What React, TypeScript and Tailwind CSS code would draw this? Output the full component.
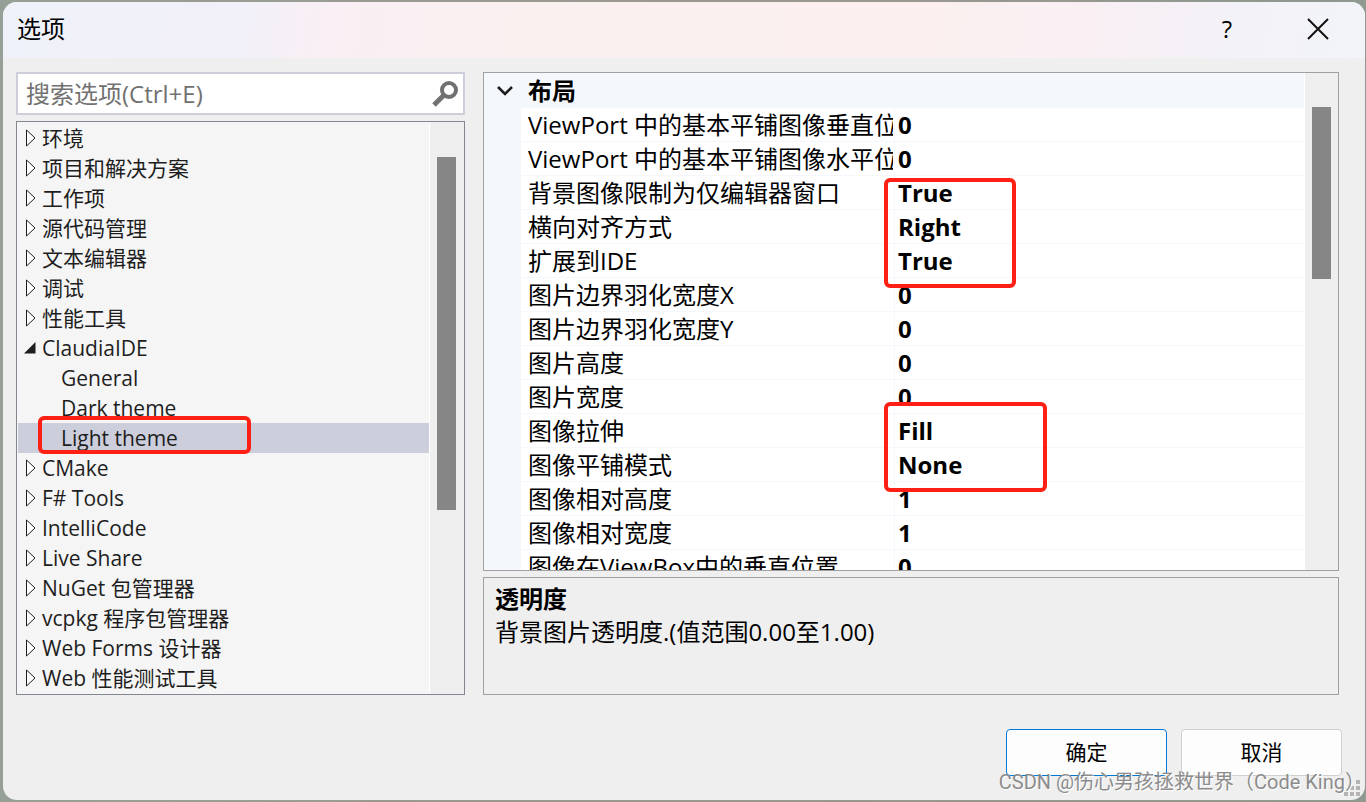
import { useState } from "react";

type Node = { label: string; level?: number; open?: boolean };

const nodes: Node[] = [
  { label: "环境" },
  { label: "项目和解决方案" },
  { label: "工作项" },
  { label: "源代码管理" },
  { label: "文本编辑器" },
  { label: "调试" },
  { label: "性能工具" },
  { label: "ClaudiaIDE", open: true },
  { label: "General", level: 1 },
  { label: "Dark theme", level: 1 },
  { label: "Light theme", level: 1 },
  { label: "CMake" },
  { label: "F# Tools" },
  { label: "IntelliCode" },
  { label: "Live Share" },
  { label: "NuGet 包管理器" },
  { label: "vcpkg 程序包管理器" },
  { label: "Web Forms 设计器" },
  { label: "Web 性能测试工具" },
];

const props = [
  ["ViewPort 中的基本平铺图像垂直位", "0"],
  ["ViewPort 中的基本平铺图像水平位", "0"],
  ["背景图像限制为仅编辑器窗口", "True"],
  ["横向对齐方式", "Right"],
  ["扩展到IDE", "True"],
  ["图片边界羽化宽度X", "0"],
  ["图片边界羽化宽度Y", "0"],
  ["图片高度", "0"],
  ["图片宽度", "0"],
  ["图像拉伸", "Fill"],
  ["图像平铺模式", "None"],
  ["图像相对高度", "1"],
  ["图像相对宽度", "1"],
  ["图像在ViewBox中的垂直位置", "0"],
];

function Arrow({ open }: { open?: boolean }) {
  return (
    <svg width="12" height="18" viewBox="0 0 12 18" className="shrink-0" aria-hidden="true">
      {open ? (
        <path d="M11.5 3v11.5H0z" fill="#1e1e1e" />
      ) : (
        <path d="M2.5 1v16l8.5-8z" fill="#fff" stroke="#1e1e1e" strokeWidth="1" />
      )}
    </svg>
  );
}

function Tree() {
  const [selected, setSelected] = useState("Light theme");

  return (
    <div className="flex-1 min-h-0 flex border border-[#828790] bg-[#f5f5f5]">
      <ul className="flex-1 min-w-0 overflow-hidden p-px pr-0">
        {nodes.map((n) => (
          <li key={n.label} className={n.label === "Light theme" ? "relative" : ""}>
            <button
              onClick={() => setSelected(n.label)}
              className={`w-full h-[30px] flex items-center gap-[6px] text-[21px] leading-[30px] text-left whitespace-nowrap text-[#1e1e1e] ${
                n.level ? "pl-[43px]" : "pl-[6px]"
              } ${selected === n.label ? "bg-[#cccedb]" : ""}`}
            >
              {!n.level && <Arrow open={n.open} />}
              <span>{n.label}</span>
            </button>
            {n.label === "Light theme" && (
              <div className="absolute left-5 -top-[7px] w-[213px] h-[38px] border-4 border-[#ff2015] rounded-md pointer-events-none" />
            )}
          </li>
        ))}
      </ul>
      <div className="w-[35px] border-l border-white bg-[#efefef] pt-[35px] pl-[7px]">
        <div className="w-[19px] h-[353px] bg-[#868686]" />
      </div>
    </div>
  );
}

function PropertyGrid() {
  return (
    <div className="flex-1 min-h-0 flex border border-[#a0a0a0] bg-white">
      <div className="relative flex-1 min-w-0 overflow-hidden">
        <table className="w-full table-fixed border-separate border-spacing-0 text-2xl leading-[33px] text-black">
          <colgroup>
            <col className="w-[37px]" />
            <col className="w-[374px]" />
            <col />
          </colgroup>
          <thead>
            <tr className="bg-[#f4f7fc]">
              <th className="h-[35px] p-0">
                <button aria-label="折叠" className="block pl-3">
                  <svg width="18" height="12" viewBox="0 0 18 12" fill="none" stroke="#1e1e1e" strokeWidth="2.6">
                    <path d="M2 2l7 7 7-7" />
                  </svg>
                </button>
              </th>
              <th colSpan={2} className="p-0 pl-[7px] text-left font-bold">
                布局
              </th>
            </tr>
          </thead>
          <tbody>
            {props.map(([name, value]) => (
              <tr key={name}>
                <td className="p-0 bg-[#f4f7fc]" />
                <td className="h-[34px] p-0 pl-[7px] pr-px border-b border-r border-[#f4f7fc]">
                  <div className="overflow-hidden whitespace-nowrap">{name}</div>
                </td>
                <td className="p-0 pl-[3px] border-b border-[#f4f7fc] font-bold">{value}</td>
              </tr>
            ))}
          </tbody>
        </table>
        <div className="absolute left-[400px] top-[105px] w-[132px] h-[110px] border-4 border-[#ff2015] rounded-md pointer-events-none" />
        <div className="absolute left-[400px] top-[329px] w-[163px] h-[90px] border-4 border-[#ff2015] rounded-md pointer-events-none" />
      </div>
      <div className="w-[34px] border-l border-white bg-[#efefef] pt-[34px] pl-[7px]">
        <div className="w-[19px] h-[172px] bg-[#868686]" />
      </div>
    </div>
  );
}

export default function App() {
  return (
    <div className="h-screen pt-[2px] pr-px pb-[2px] pl-[3px] bg-linear-to-r from-[#96a097] via-[#9b978f] to-[#8f998f] font-['Open_Sans','Noto_Sans_CJK_SC',sans-serif]">
      <div className="relative h-full flex flex-col rounded-[14px] overflow-hidden bg-[#efefef]">
        <header className="h-14 shrink-0 flex items-center pl-[14px] pr-9 pb-[2px] bg-[linear-gradient(100deg,#eff2fa_0%,#f2f0f8_18%,#f9eff4_24%,#faf0ef_40%,#fbf0ef_68%,#faeff3_78%,#f3f2f8_90%,#f2f4f9_100%)]">
          <h1 className="flex-1 text-2xl text-black">选项</h1>
          <div className="flex items-center gap-[70px]">
            <button aria-label="帮助" className="w-5 text-2xl text-black">
              ?
            </button>
            <button aria-label="关闭">
              <svg width="22" height="22" viewBox="0 0 22 22" fill="none" stroke="#111" strokeWidth="2">
                <path d="M1 1l20 20M21 1L1 21" />
              </svg>
            </button>
          </div>
        </header>

        <main className="flex-1 min-h-0 flex gap-[18px] pt-[14px] pl-[13px] pr-[26px]">
          <section className="w-[449px] shrink-0 flex flex-col gap-[6px]">
            <div className="h-[43px] flex items-center border-2 border-[#cccedb] bg-white pl-2 pr-[5px]">
              <input
                type="text"
                aria-label="搜索选项"
                placeholder="搜索选项(Ctrl+E)"
                className="flex-1 min-w-0 text-2xl leading-8 outline-none placeholder:text-[#717171]"
              />
              <button aria-label="搜索">
                <svg width="26" height="26" viewBox="0 0 26 26" fill="none" stroke="#717171">
                  <circle cx="17" cy="9" r="7" strokeWidth="4" />
                  <path d="M12.5 13.5L2 24" strokeWidth="5" />
                </svg>
              </button>
            </div>
            <Tree />
          </section>

          <section className="flex-1 min-w-0 flex flex-col gap-[6px]">
            <PropertyGrid />
            <div className="h-[118px] shrink-0 border border-[#a0a0a0] px-[11px] py-1 text-2xl leading-[33px] text-black">
              <h2 className="font-bold">透明度</h2>
              <p>背景图片透明度.(值范围0.00至1.00)</p>
            </div>
          </section>
        </main>

        <footer className="shrink-0 flex justify-end gap-[14px] pt-[34px] pr-[23px] pb-6">
          <button className="w-[161px] h-[47px] rounded border border-[#0078d4] bg-[#fdfdfd] text-[21px] text-black">
            确定
          </button>
          <button className="w-[161px] h-[47px] rounded border border-[#d0d0d0] bg-[#fdfdfd] text-[21px] text-black">
            取消
          </button>
        </footer>

        <svg
          width="16"
          height="16"
          viewBox="0 0 16 16"
          fill="#b4b4b4"
          className="absolute right-[5px] bottom-1"
          aria-hidden="true"
        >
          <path d="M12 0h4v4h-4zM6 6h4v4H6zM12 6h4v4h-4zM0 12h4v4H0zM6 12h4v4H6zM12 12h4v4h-4z" />
        </svg>
        <p className="absolute right-0 bottom-1 text-xl leading-7 whitespace-nowrap text-[#8c8c8c] [text-shadow:1px_1px_0_#fff] font-['Roboto','Noto_Sans_CJK_SC',sans-serif]">
          CSDN @伤心男孩拯救世界（Code King）
        </p>
      </div>
    </div>
  );
}
